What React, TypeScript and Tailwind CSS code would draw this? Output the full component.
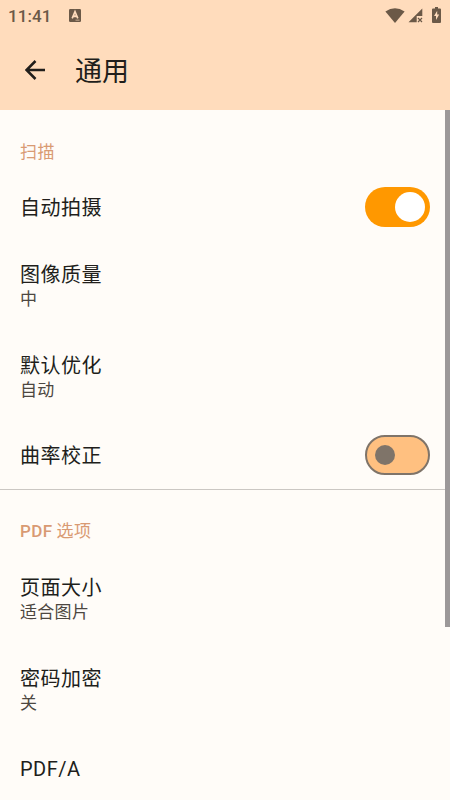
const SCAN_OPTIONS = [
  { title: '自动拍摄', enabled: true },
  { title: '图像质量', value: '中' },
  { title: '默认优化', value: '自动' },
  { title: '曲率校正', enabled: false },
]

const PDF_OPTIONS = [
  { title: '页面大小', value: '适合图片' },
  { title: '密码加密', value: '关' },
  { title: 'PDF/A' },
]

type Option = { title: string; value?: string; enabled?: boolean }

function StatusBar() {
  return (
    <div className="flex h-[30px] items-center pl-2 pr-[9px] text-[#6b5947]">
      <span className="text-[17px] leading-[30px] font-medium tracking-[0.1px] pt-px">11:41</span>
      <svg className="ml-[17px] h-[13px] w-3" viewBox="0 0 12 12" preserveAspectRatio="none" aria-hidden="true">
        <rect width="12" height="12" rx="1.2" fill="currentColor" />
        <path d="M3.2 8.6 6 2.5l2.8 6.1M4.3 6.700h3.400" fill="none" stroke="#ffdcbc" strokeWidth="1.7" />
        <path d="M6.5 10.3h4" stroke="#ffdcbc" strokeWidth=".6" />
      </svg>
      <svg className="ml-auto h-[15px] w-5" viewBox="0 0 20 15" aria-hidden="true">
        <path d="M.4 3.6Q10-3.2 19.6 3.6L10 15Z" fill="currentColor" />
      </svg>
      <svg className="ml-[3px] h-[15px] w-[15px]" viewBox="0 0 15 15" aria-hidden="true">
        <path d="M14.3.5V8H8.7v6.3H.5Z" fill="currentColor" />
        <path d="m10 10 4 4m0-4-4 4" stroke="currentColor" strokeWidth="1.2" />
      </svg>
      <svg className="ml-[9px] h-4 w-[9px]" viewBox="0 0 9 16" aria-hidden="true">
        <path d="M3 0h3v1.6h2q1 0 1 1V15q0 1-1 1H1q-1 0-1-1V2.6q0-1 1-1h2Z" fill="currentColor" />
        <path d="M5.2 3.8 2 9h2v4l3.2-5.5H5.2Z" fill="#ffdcbc" />
      </svg>
    </div>
  )
}

function Toggle({ enabled }: { enabled: boolean }) {
  return (
    <button
      role="switch"
      aria-checked={enabled}
      className={
        enabled
          ? 'mb-[2px] flex h-10 w-[65px] items-center justify-end rounded-full bg-[#ff9800] pr-[5px]'
          : 'mb-[2px] flex h-10 w-[65px] items-center rounded-full border-[2px] border-[#7f7469] bg-[#ffc080] pl-[8px]'
      }
    >
      <span className={enabled ? 'size-[30px] rounded-full bg-white' : 'size-5 rounded-full bg-[#7f7469]'} />
    </button>
  )
}

function OptionRow({ title, value, enabled }: Option) {
  return (
    <div className={`flex items-center justify-between px-5 ${value ? 'h-[91px]' : 'h-[66px]'}`}>
      <div>
        <div className="text-[20px] leading-[26px] tracking-[0.5px] text-[#211e1b]">{title}</div>
        {value && <div className="text-[17px] leading-[23px] tracking-[0.3px] text-[#4d4741]">{value}</div>}
      </div>
      {enabled !== undefined && <Toggle enabled={enabled} />}
    </div>
  )
}

function Section({ prefix, title, options }: { prefix?: string; title: string; options: Option[] }) {
  return (
    <section>
      <h2 className="flex h-16 items-center gap-1 px-5 pt-[18px] text-[17px] leading-6 tracking-[0.4px] text-[#d99a73]">
        {prefix && <span className="font-medium">{prefix}</span>}
        <span>{title}</span>
      </h2>
      {options.map((option) => (
        <OptionRow key={option.title} {...option} />
      ))}
    </section>
  )
}

export default function App() {
  return (
    <div className="flex h-[800px] w-[450px] flex-col overflow-hidden bg-[#fffcf8] font-[Roboto,'Noto_Sans_CJK_SC',sans-serif]">
      <header className="h-[110px] shrink-0 bg-[#ffdcbc]">
        <StatusBar />
        <div className="flex h-20 items-center pl-[25px]">
          <svg className="h-5 w-5" viewBox="0 0 20 20" fill="none" stroke="#211e1b" strokeWidth="2.5" aria-label="返回">
            <path d="M20 10H2M10.5 1 1.5 10l9 9" />
          </svg>
          <h1 className="ml-[30px] pt-[3px] text-[27px] leading-9 text-[#211e1b]">通用</h1>
        </div>
      </header>
      <div className="flex min-h-0 flex-1">
        <main className="-mr-[5px] w-[450px] shrink-0 pt-px">
          <Section title="扫描" options={SCAN_OPTIONS} />
          <div className="h-px bg-[#cbc7c3]" />
          <Section prefix="PDF" title="选项" options={PDF_OPTIONS} />
        </main>
        <div className="h-[517px] w-[5px] shrink-0 bg-[#9c9899]" />
      </div>
    </div>
  )
}
